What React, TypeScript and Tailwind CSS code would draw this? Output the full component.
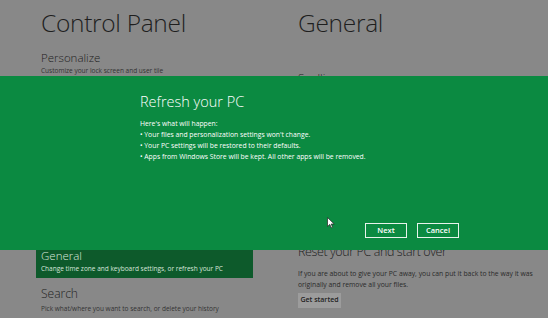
import React from "react";

export default function App() {
  const font = { fontFamily: '"Open Sans", "Noto Sans", sans-serif' };
  return (
    <div className="relative w-[548px] h-[318px] overflow-hidden bg-[#888888] text-[#1e1e1e]" style={font}>
      <div className="flex pl-[41px] pt-[6px]">
        <div className="w-[257px] flex flex-col">
          <div className="text-[24.5px] font-light leading-[34px] tracking-[-0.3px]">Control Panel</div>
          <div className="mt-[10px] text-[11.5px] leading-[16px] font-light">Personalize</div>
          <div className="text-[6.5px] leading-[9px] text-[#333]">Customize your lock screen and user tile</div>
          <div className="h-[172px]" />
          <div className="-ml-[5px] w-[217px] bg-[#0d5a2b] pl-[5px] pt-[1px] pb-[5px] text-[#d8e6dc]">
            <div className="text-[11.5px] leading-[16px] font-light">General</div>
            <div className="text-[6.5px] leading-[9px]">Change time zone and keyboard settings, or refresh your PC</div>
          </div>
          <div className="mt-[7px] text-[12px] leading-[18px] font-light">Search</div>
          <div className="mt-[1px] text-[6.5px] leading-[9px] text-[#333]">Pick what/where you want to search, or delete your history</div>
        </div>
        <div className="flex flex-col">
          <div className="text-[24.5px] font-light leading-[34px] tracking-[-0.3px]">General</div>
          <div className="mt-[30px] text-[11.5px] leading-[16px] font-light">Spelling</div>
          <div className="h-[156px]" />
          <div className="text-[12.5px] leading-[20px] font-light tracking-[-0.4px]">Reset your PC and start over</div>
          <div className="mt-[6px] w-[250px] text-[6.8px] leading-[11px] text-[#2a2a2a]">
            If you are about to give your PC away, you can put it back to the way it was originally and remove all your files.
          </div>
          <div className="mt-[3px] w-[43px] h-[15px] bg-[#9c9c9c] text-[7px] flex items-center justify-center font-semibold text-[#222]">
            Get started
          </div>
        </div>
      </div>

      <div className="absolute left-0 right-0 top-[76px] h-[174px] bg-[#0b8a41] text-white">
        <div className="pl-[140px] pt-[16px] flex flex-col">
          <div className="text-[14.5px] leading-[20px] font-light">Refresh your PC</div>
          <div className="mt-[6px] text-[6.8px] leading-[11px]">
            <div>Here's what will happen:</div>
            <div>• Your files and personalization settings won't change.</div>
            <div>• Your PC settings will be restored to their defaults.</div>
            <div>• Apps from Windows Store will be kept. All other apps will be removed.</div>
          </div>
        </div>
        <div className="absolute top-[147px] left-[365px] flex gap-[10px]">
          <div className="w-[42px] h-[15px] border border-[#e8f3ec] flex items-center justify-center text-[7.5px] font-semibold">Next</div>
          <div className="w-[42px] h-[15px] border border-[#e8f3ec] flex items-center justify-center text-[7.5px] font-semibold">Cancel</div>
        </div>
        <svg className="absolute left-[327px] top-[141px]" width="8" height="12" viewBox="0 0 8 12">
          <path d="M0.5 0.5 L0.5 9.5 L2.8 7.4 L4.3 10.8 L5.6 10.2 L4.2 7 L7.2 7 Z" fill="white" stroke="#222" strokeWidth="0.7" />
        </svg>
      </div>
    </div>
  );
}
